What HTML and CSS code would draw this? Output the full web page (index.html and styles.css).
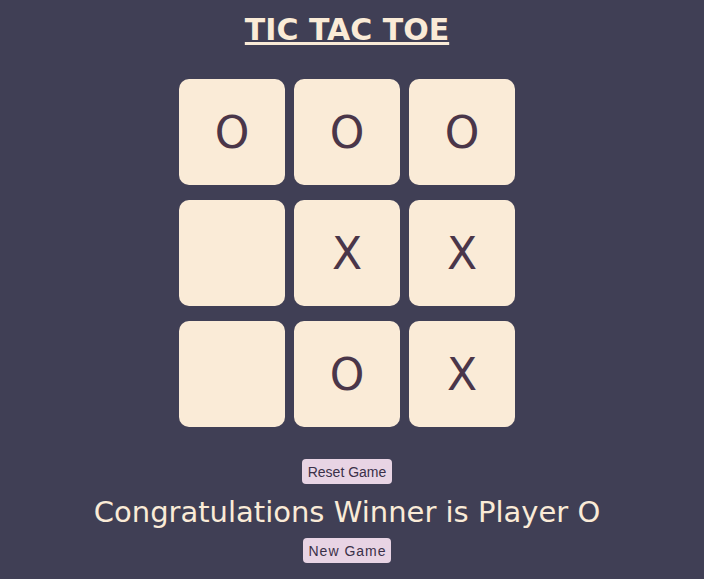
FILE: index.html
```html
<!DOCTYPE html>
<html>
<head>
<meta charset="utf-8">
<link rel="stylesheet" href="styles.css">
</head>
<body>
<div class="page">
  <h1 class="title">TIC TAC TOE</h1>
  <div class="board">
    <div class="cell">O</div>
    <div class="cell">O</div>
    <div class="cell">O</div>
    <div class="cell"></div>
    <div class="cell">X</div>
    <div class="cell">X</div>
    <div class="cell"></div>
    <div class="cell">O</div>
    <div class="cell">X</div>
  </div>
  <button class="btn btn-reset">Reset Game</button>
  <div class="msg">Congratulations Winner is Player O</div>
  <button class="btn btn-new">New Game</button>
</div>
</body>
</html>
```
FILE: styles.css
```css
html, body {
  margin: 0;
  padding: 0;
  background: #403f55;
  height: 100%;
}
.page {
  width: 694px;
  display: flex;
  flex-direction: column;
  align-items: center;
  font-family: "DejaVu Sans", Verdana, sans-serif;
}
.title {
  margin: 12px 0 0 0;
  font-size: 30px;
  line-height: 36px;
  font-weight: bold;
  color: #faebd7;
  text-decoration: underline;
}
.board {
  margin-top: 31px;
  display: grid;
  grid-template-columns: repeat(3, 106px);
  grid-auto-rows: 106px;
  column-gap: 9px;
  row-gap: 15px;
}
.cell {
  background: #faebd7;
  border-radius: 10px;
  display: flex;
  align-items: center;
  justify-content: center;
  font-size: 44px;
  color: #4a3649;
}
.btn {
  font-family: "Liberation Sans", Arial, sans-serif;
  font-size: 14px;
  background: #e8d4e4;
  color: #3a3048;
  border: none;
  border-radius: 4px;
  padding: 0 5px;
  height: 25px;
}
.btn-reset {
  margin-top: 32px;
  padding: 0 6px;
}
.btn-new {
  margin-top: 6px;
  letter-spacing: 1px;
  padding: 0 4px 0 5px;
}
.msg {
  margin-top: 8px;
  font-size: 29px;
  line-height: 40px;
  color: #faebd7;
}
```
